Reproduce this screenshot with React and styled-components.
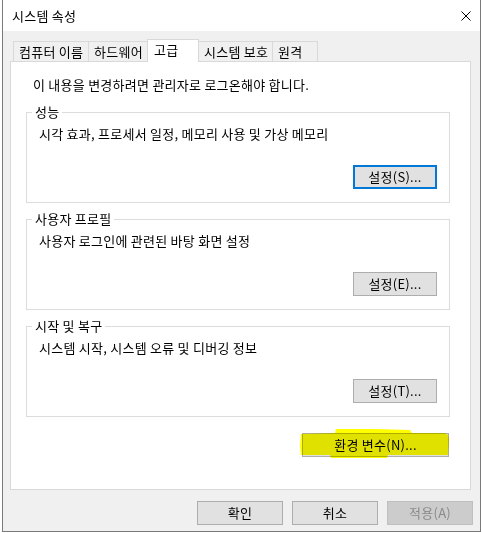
import React from "react";
import styled, { createGlobalStyle } from "styled-components";

const GlobalStyle = createGlobalStyle`
  html, body {
    margin: 0;
    padding: 0;
    background: #ffffff;
  }
  body {
    font-family: "Noto Sans CJK KR", "Noto Sans", sans-serif;
    font-size: 13px;
    letter-spacing: 0.25px;
    color: #000000;
  }
`;

const Desktop = styled.div`
  width: 482px;
  height: 533px;
  padding-left: 2px;
  box-sizing: border-box;
  overflow: hidden;
`;

const Window = styled.div`
  width: 479px;
  height: 532px;
  box-sizing: border-box;
  border: 1px solid #7a7a7a;
  border-top: none;
  background: #f0f0f0;
  display: flex;
  flex-direction: column;
`;

const TitleBar = styled.div`
  height: 31px;
  flex: none;
  background: #ffffff;
  display: flex;
  align-items: center;
  justify-content: space-between;
  padding: 0 9px 0 9px;
  box-sizing: border-box;
  line-height: 16px;
`;

const Body = styled.div`
  flex: 1;
  padding: 8px 9px 0 7px;
  display: flex;
  flex-direction: column;
`;

const TabRow = styled.div`
  height: 22px;
  padding-left: 3px;
  display: flex;
  align-items: flex-end;
  position: relative;
  z-index: 1;
`;

const Tab = styled.div`
  width: ${(p) => p.$w}px;
  height: ${(p) => (p.$active ? 23 : 20)}px;
  margin-left: ${(p) => (p.$first ? 0 : -1)}px;
  margin-bottom: ${(p) => (p.$active ? -1 : 0)}px;
  box-sizing: border-box;
  border: 1px solid #d9d9d9;
  border-bottom: none;
  background: ${(p) => (p.$active ? "#ffffff" : "#f0f0f0")};
  display: flex;
  align-items: center;
  padding: 0 0 ${(p) => (p.$active ? 2 : 0)}px ${(p) => (p.$active ? 6 : 5)}px;
  line-height: 16px;
  white-space: nowrap;
  position: relative;
  z-index: ${(p) => (p.$active ? 2 : 1)};
`;

const Panel = styled.div`
  height: 429px;
  box-sizing: border-box;
  background: #ffffff;
  border: 1px solid #d9d9d9;
  padding: 15px 0 0 15px;
  display: flex;
  flex-direction: column;
  align-items: flex-start;
`;

const Intro = styled.div`
  padding-left: 7px;
  line-height: 16px;
  white-space: nowrap;
`;

const Groups = styled.div`
  width: 424px;
  margin-top: 19px;
  display: flex;
  flex-direction: column;
  gap: 16px;
`;

const Group = styled.div`
  position: relative;
  height: 91px;
  box-sizing: border-box;
  border: 1px solid #dcdcdc;
  padding: 13px 12px 13px 12px;
  display: flex;
  flex-direction: column;
  justify-content: space-between;
  align-items: flex-start;
`;

const GroupLabel = styled.span`
  position: absolute;
  top: -9px;
  left: 5px;
  padding: 0 3px;
  background: #ffffff;
  line-height: 16px;
  white-space: nowrap;
`;

const GroupText = styled.div`
  line-height: 16px;
  white-space: nowrap;
`;

const Button = styled.button`
  width: ${(p) => p.$w}px;
  height: 24px;
  box-sizing: border-box;
  padding: 0;
  margin: 0;
  font-family: inherit;
  font-size: 13px;
  letter-spacing: 0.25px;
  line-height: 16px;
  color: ${(p) => (p.disabled ? "#8a8a8a" : "#000000")};
  background: ${(p) => (p.disabled ? "#cccccc" : "#e1e1e1")};
  border: ${(p) =>
    p.$focused
      ? "2px solid #0078d7"
      : p.disabled
      ? "1px solid #bfbfbf"
      : "1px solid #adadad"};
  align-self: ${(p) => (p.$end ? "flex-end" : "auto")};
  white-space: nowrap;
`;

const EnvWrap = styled.div`
  margin-top: 16px;
  width: 424px;
  display: flex;
  justify-content: flex-end;
  padding-right: 1px;
  box-sizing: border-box;
`;

const EnvSlot = styled.div`
  position: relative;
`;

const Highlight = styled.svg`
  position: absolute;
  left: -2px;
  top: -4px;
  pointer-events: none;
  mix-blend-mode: multiply;
`;

const Footer = styled.div`
  margin: 11px -2px 0 0;
  display: flex;
  justify-content: flex-end;
  gap: 9px;
`;

const CloseIcon = () => (
  <svg width="10" height="10" viewBox="0 0 10 10">
    <path d="M0.5 0.5 L9.5 9.5 M9.5 0.5 L0.5 9.5" stroke="#000" strokeWidth="1" fill="none" />
  </svg>
);

const tabs = [
  { label: "컴퓨터 이름", w: 76 },
  { label: "하드웨어", w: 60 },
  { label: "고급", w: 52, active: true },
  { label: "시스템 보호", w: 75 },
  { label: "원격", w: 46 },
];

const groups = [
  { title: "성능", text: "시각 효과, 프로세서 일정, 메모리 사용 및 가상 메모리", btn: "설정(S)...", focused: true },
  { title: "사용자 프로필", text: "사용자 로그인에 관련된 바탕 화면 설정", btn: "설정(E)..." },
  { title: "시작 및 복구", text: "시스템 시작, 시스템 오류 및 디버깅 정보", btn: "설정(T)..." },
];

export default function App() {
  return (
    <>
      <GlobalStyle />
      <Desktop>
        <Window>
          <TitleBar>
            <span>시스템 속성</span>
            <CloseIcon />
          </TitleBar>
          <Body>
            <TabRow>
              {tabs.map((t, i) => (
                <Tab key={t.label} $w={t.w} $first={i === 0} $active={t.active}>
                  {t.label}
                </Tab>
              ))}
            </TabRow>
            <Panel>
              <Intro>이 내용을 변경하려면 관리자로 로그온해야 합니다.</Intro>
              <Groups>
                {groups.map((g) => (
                  <Group key={g.title}>
                    <GroupLabel>{g.title}</GroupLabel>
                    <GroupText>{g.text}</GroupText>
                    <Button $w={84} $end $focused={g.focused}>
                      {g.btn}
                    </Button>
                  </Group>
                ))}
              </Groups>
              <EnvWrap>
                <EnvSlot>
                  <Button $w={147}>환경 변수(N)...</Button>
                  <Highlight width="151" height="31" viewBox="0 0 151 31">
                    <polygon
                      points="1,5 35,4 36,0 75,0 110,1 112,4 145,4 148,6 149,10 148,26 88,26 87,29 31,29 30,26 1,26 0,17"
                      fill="#ffff00"
                    />
                  </Highlight>
                </EnvSlot>
              </EnvWrap>
            </Panel>
            <Footer>
              <Button $w={86}>확인</Button>
              <Button $w={86}>취소</Button>
              <Button $w={86} disabled>
                적용(A)
              </Button>
            </Footer>
          </Body>
        </Window>
      </Desktop>
    </>
  );
}
